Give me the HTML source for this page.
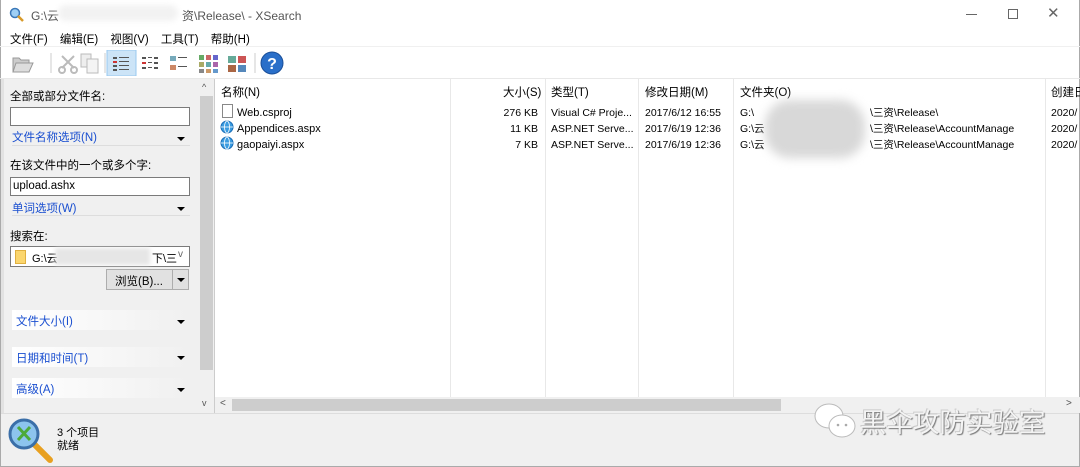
<!DOCTYPE html>
<html><head><meta charset="utf-8"><style>
*{margin:0;padding:0;box-sizing:border-box}
body{width:1080px;height:467px;overflow:hidden;background:#fff;font-family:"Liberation Sans","Noto Sans CJK SC",sans-serif;font-size:11px;color:#000;position:relative}
.a{position:absolute;white-space:nowrap}
.blue{color:#1a4fd0}
.sec{position:absolute;left:12px;width:178px;height:20px;background:linear-gradient(90deg,#fff,#f0f0f0);}
.sec span{position:absolute;left:4px;top:3px;color:#1a4fd0;font-size:11.5px}
.tri{position:absolute;width:0;height:0;border-left:4px solid transparent;border-right:4px solid transparent;border-top:4px solid #000}
</style></head><body>
<div class="a" style="left:0;top:0;width:1080px;height:467px;border:1px solid #aaa;border-top:none"></div>
<svg class="a" style="left:9px;top:7px" width="16" height="16"><circle cx="6" cy="6" r="4.5" fill="#9fd0f5" stroke="#3b78b8" stroke-width="1.5"/><line x1="9" y1="9" x2="14" y2="14" stroke="#d89a2a" stroke-width="2.5"/></svg>
<div class="a" style="left:31px;top:7px;font-size:12px;color:#555">G:\云</div>
<div class="a" style="left:58px;top:5px;width:120px;height:16px;background:#f2f2f2;filter:blur(3px);border-radius:8px"></div>
<div class="a" style="left:182px;top:7px;font-size:12px;color:#555">资\Release\ - XSearch</div>
<div class="a" style="left:966px;top:14px;width:11px;height:1px;background:#666"></div>
<div class="a" style="left:1008px;top:9px;width:10px;height:10px;border:1px solid #666"></div>
<div class="a" style="left:1047px;top:4px;font-size:15px;color:#666">✕</div>
<div class="a" style="left:10px;top:31px;font-size:11.5px;word-spacing:9px">文件(F) 编辑(E) 视图(V) 工具(T) 帮助(H)</div>
<div class="a" style="left:0;top:46px;width:1080px;height:1px;background:#f0f0f0"></div>
<svg class="a" style="left:10px;top:50px" width="280" height="26">
<path d="M3 8h6l2 2h8v12H3z" fill="#ccc" stroke="#999"/><path d="M6 13h17l-4 9H3z" fill="#ddd" stroke="#999"/>
<line x1="41" y1="3" x2="41" y2="23" stroke="#ccc"/>
<path d="M52 6l12 12M64 6L52 18" stroke="#bbb" stroke-width="2"/><circle cx="52" cy="20" r="3" fill="none" stroke="#bbb" stroke-width="2"/><circle cx="64" cy="20" r="3" fill="none" stroke="#bbb" stroke-width="2"/>
<rect x="71" y="4" width="10" height="13" fill="#eee" stroke="#bbb"/><rect x="77" y="9" width="11" height="14" fill="#f4f4f4" stroke="#bbb"/>
<line x1="95" y1="3" x2="95" y2="23" stroke="#ccc"/>
<rect x="97" y="0" width="29" height="26" fill="#cce4f7" stroke="#99c9ef"/>
<g fill="#555"><rect x="103" y="7" width="4" height="2"/><rect x="109" y="7" width="10" height="1"/><rect x="103" y="11" width="4" height="2" fill="#c33"/><rect x="109" y="11" width="10" height="1"/><rect x="103" y="15" width="4" height="2"/><rect x="109" y="15" width="10" height="1"/><rect x="103" y="19" width="4" height="2"/><rect x="109" y="19" width="10" height="1"/></g>
<g fill="#555"><rect x="132" y="7" width="4" height="2"/><rect x="138" y="7" width="4" height="1"/><rect x="144" y="7" width="4" height="2"/><rect x="132" y="12" width="4" height="2" fill="#c33"/><rect x="138" y="12" width="4" height="1"/><rect x="144" y="12" width="4" height="2"/><rect x="132" y="17" width="4" height="2"/><rect x="138" y="17" width="4" height="1"/><rect x="144" y="17" width="4" height="2"/></g>
<g><rect x="160" y="6" width="6" height="5" fill="#7ab"/><rect x="168" y="7" width="9" height="1" fill="#555"/><rect x="160" y="15" width="6" height="5" fill="#c86"/><rect x="168" y="16" width="9" height="1" fill="#555"/></g>
<g><rect x="189" y="5" width="5" height="5" fill="#6a6"/><rect x="196" y="5" width="5" height="5" fill="#c66"/><rect x="203" y="5" width="5" height="5" fill="#66c"/><rect x="189" y="12" width="5" height="5" fill="#aa6"/><rect x="196" y="12" width="5" height="5" fill="#6aa"/><rect x="203" y="12" width="5" height="5" fill="#a6a"/><rect x="189" y="19" width="5" height="4" fill="#888"/><rect x="196" y="19" width="5" height="4" fill="#c96"/><rect x="203" y="19" width="5" height="4" fill="#69c"/></g>
<g><rect x="218" y="6" width="8" height="7" fill="#6a9"/><rect x="228" y="6" width="8" height="7" fill="#c55"/><rect x="218" y="15" width="8" height="7" fill="#a64"/><rect x="228" y="15" width="8" height="7" fill="#58b"/></g>
<line x1="245" y1="3" x2="245" y2="23" stroke="#ccc"/>
<circle cx="262" cy="13" r="11" fill="#2a6fc9" stroke="#1a4f99"/><text x="262" y="19" text-anchor="middle" fill="#fff" font-size="16" font-weight="bold" font-family="Liberation Sans">?</text>
</svg>
<div class="a" style="left:0;top:78px;width:1080px;height:1px;background:#e8e8e8"></div>
<div class="a" style="left:1px;top:79px;width:213px;height:334px;background:#f0f0f0"></div>
<div class="a" style="left:1px;top:79px;width:3px;height:334px;background:#e2e2e2"></div>
<div class="a" style="left:199px;top:79px;width:15px;height:334px;background:#f0f0f0"></div>
<div class="a" style="left:200px;top:96px;width:13px;height:274px;background:#cdcdcd"></div>
<div class="a" style="left:202px;top:82px;font-size:9px;color:#555">^</div>
<div class="a" style="left:202px;top:398px;font-size:9px;color:#555">v</div>
<div class="a" style="left:214px;top:79px;width:1px;height:334px;background:#ccc"></div>
<div class="a" style="left:10px;top:88px;font-size:11.5px">全部或部分文件名:</div>
<div class="a" style="left:10px;top:107px;width:180px;height:19px;background:#fff;border:1px solid #7a7a7a"></div>
<div class="a blue" style="left:12px;top:129px;font-size:11.5px">文件名称选项(N)</div>
<div class="tri" style="left:177px;top:137px"></div>
<div class="a" style="left:12px;top:145px;width:178px;height:1px;background:#ddd"></div>
<div class="a" style="left:10px;top:157px;font-size:11.5px">在该文件中的一个或多个字:</div>
<div class="a" style="left:10px;top:177px;width:180px;height:19px;background:#fff;border:1px solid #7a7a7a"></div>
<div class="a" style="left:13px;top:180px;font-size:11.5px">upload.ashx</div>
<div class="a blue" style="left:12px;top:200px;font-size:11.5px">单词选项(W)</div>
<div class="tri" style="left:177px;top:207px"></div>
<div class="a" style="left:12px;top:215px;width:178px;height:1px;background:#ddd"></div>
<div class="a" style="left:10px;top:228px;font-size:11.5px">搜索在:</div>
<div class="a" style="left:10px;top:246px;width:180px;height:21px;background:#fff;border:1px solid #7a7a7a"></div>
<div class="a" style="left:15px;top:250px;width:11px;height:14px;background:#fbd66e;border:1px solid #e0b040"></div>
<div class="a" style="left:32px;top:250px;font-size:11px">G:\云</div>
<div class="a" style="left:55px;top:248px;width:95px;height:17px;background:#e6e6e6;filter:blur(2px)"></div>
<div class="a" style="left:152px;top:250px;font-size:11px">下\三</div>
<div class="a" style="left:178px;top:249px;font-size:10px;color:#666">v</div>
<div class="a" style="left:106px;top:269px;width:83px;height:21px;background:#e1e1e1;border:1px solid #adadad"></div>
<div class="a" style="left:172px;top:270px;width:1px;height:19px;background:#adadad"></div>
<div class="a" style="left:115px;top:273px;font-size:11.5px">浏览(B)...</div>
<div class="tri" style="left:177px;top:278px"></div>
<div class="sec" style="top:310px"><span>文件大小(I)</span></div><div class="tri" style="left:177px;top:320px"></div>
<div class="sec" style="top:347px"><span>日期和时间(T)</span></div><div class="tri" style="left:177px;top:356px"></div>
<div class="sec" style="top:378px"><span>高级(A)</span></div><div class="tri" style="left:177px;top:388px"></div>
<div class="a" style="left:450px;top:79px;width:1px;height:318px;background:#e8e8e8"></div>
<div class="a" style="left:545px;top:79px;width:1px;height:318px;background:#e8e8e8"></div>
<div class="a" style="left:638px;top:79px;width:1px;height:318px;background:#e8e8e8"></div>
<div class="a" style="left:733px;top:79px;width:1px;height:318px;background:#e8e8e8"></div>
<div class="a" style="left:1045px;top:79px;width:1px;height:318px;background:#e8e8e8"></div>
<div class="a" style="left:221px;top:84px;font-size:11.5px">名称(N)</div>
<div class="a" style="left:503px;top:84px;font-size:11.5px">大小(S)</div>
<div class="a" style="left:551px;top:84px;font-size:11.5px">类型(T)</div>
<div class="a" style="left:645px;top:84px;font-size:11.5px">修改日期(M)</div>
<div class="a" style="left:740px;top:84px;font-size:11.5px">文件夹(O)</div>
<div class="a" style="left:1051px;top:84px;font-size:11.5px">创建日</div>
<div class="a" style="left:222px;top:104px;width:11px;height:14px;border:1px solid #888;background:#fff"></div>
<svg class="a" style="left:220px;top:120px" width="14" height="30"><g fill="#3a9be0" stroke="#1a6eb8"><circle cx="7" cy="7" r="6"/><circle cx="7" cy="23" r="6"/></g><g stroke="#fff" fill="none" stroke-width="0.8"><ellipse cx="7" cy="7" rx="2.5" ry="6"/><line x1="1" y1="7" x2="13" y2="7"/><ellipse cx="7" cy="23" rx="2.5" ry="6"/><line x1="1" y1="23" x2="13" y2="23"/></g></svg>
<div class="a" style="left:237px;top:105px;line-height:16px;font-size:11px">Web.csproj<br>Appendices.aspx<br>gaopaiyi.aspx</div>
<div class="a" style="left:480px;top:105px;width:58px;text-align:right;line-height:16px;font-size:10.5px">276 KB<br>11 KB<br>7 KB</div>
<div class="a" style="left:551px;top:105px;line-height:16px;font-size:10.5px">Visual C# Proje...<br>ASP.NET Serve...<br>ASP.NET Serve...</div>
<div class="a" style="left:645px;top:105px;line-height:16px;font-size:10.5px">2017/6/12 16:55<br>2017/6/19 12:36<br>2017/6/19 12:36</div>
<div class="a" style="left:740px;top:105px;line-height:16px;font-size:10.5px">G:\<br>G:\云<br>G:\云</div>
<div class="a" style="left:765px;top:100px;width:100px;height:58px;background:#d8d8d8;filter:blur(5px);border-radius:25px"></div>
<div class="a" style="left:870px;top:105px;line-height:16px;font-size:10.5px">\三资\Release\<br>\三资\Release\AccountManage<br>\三资\Release\AccountManage</div>
<div class="a" style="left:1051px;top:105px;line-height:16px;font-size:10.5px">2020/<br>2020/<br>2020/</div>
<div class="a" style="left:215px;top:397px;width:865px;height:16px;background:#f0f0f0"></div>
<div class="a" style="left:232px;top:399px;width:549px;height:12px;background:#cdcdcd"></div>
<div class="a" style="left:220px;top:398px;font-size:10px;color:#555">&lt;</div>
<div class="a" style="left:1066px;top:398px;font-size:10px;color:#555">&gt;</div>
<div class="a" style="left:1px;top:413px;width:1078px;height:53px;background:#f0f0f0;border-top:1px solid #ddd"></div>
<svg class="a" style="left:6px;top:416px" width="48" height="48"><line x1="28" y1="28" x2="44" y2="44" stroke="#e8a020" stroke-width="6" stroke-linecap="round"/><circle cx="18" cy="18" r="14" fill="#8cc4ee" stroke="#3b6fa8" stroke-width="3"/><path d="M12 11l12 13M24 11L12 24" stroke="#4caa3a" stroke-width="3"/></svg>
<div class="a" style="left:57px;top:427px;line-height:13px;font-size:11px">3 个项目<br>就绪</div>
<svg class="a" style="left:812px;top:400px" width="50" height="44"><ellipse cx="17" cy="16" rx="14" ry="12" fill="#fff" stroke="#bbb"/><ellipse cx="30" cy="26" rx="13" ry="11" fill="#fff" stroke="#bbb"/><circle cx="26" cy="25" r="1.3" fill="#aaa"/><circle cx="34" cy="25" r="1.3" fill="#aaa"/></svg>
<div class="a" style="left:860px;top:401px;font-size:26.5px;color:#f4f4f4;text-shadow:1px 1px 1px #777,-1px -1px 0 #ccc;font-family:'Noto Sans CJK SC',sans-serif">黑伞攻防实验室</div>
</body></html>
